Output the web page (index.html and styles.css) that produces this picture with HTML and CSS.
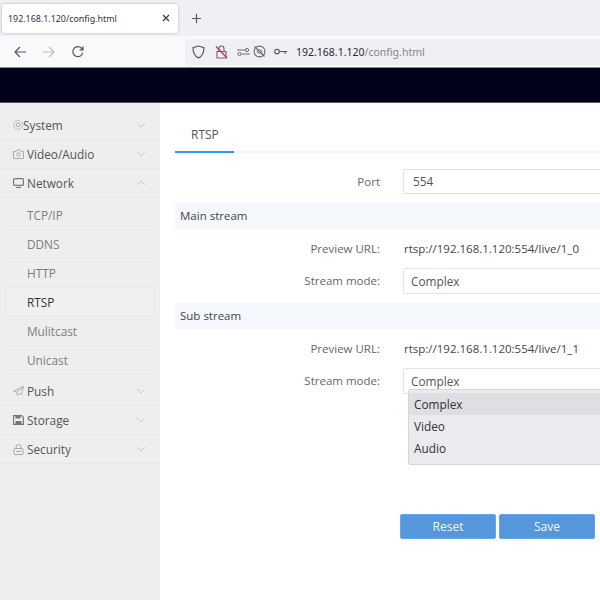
FILE: index.html
```html
<!DOCTYPE html>
<html lang="en">
<head>
    <meta charset="UTF-8">
    <title>192.168.1.120/config.html</title>
    <link rel="stylesheet" href="styles.css">
</head>
<body>
    <div class="tabstrip">
        <div class="tab">
            <span class="tab-title">192.168.1.120/config.html</span>
            <svg class="tab-close" width="8" height="8" viewBox="0 0 8 8"><path d="M1 1l6 6M7 1l-6 6" stroke="#3a3a42" stroke-width="1.2"/></svg>
        </div>
        <svg class="new-tab" width="11" height="11" viewBox="0 0 11 11"><path d="M5.500 1v9M1 5.500h9" stroke="#55555c" stroke-width="1.200"/></svg>
    </div>
    <div class="toolbar">
        <div class="nav-buttons">
            <svg width="14" height="14" viewBox="0 0 14 14" fill="none"><path d="M13 7H2M7 2L2 7l5 5" stroke="#55555c" stroke-width="1.2"/></svg>
            <svg width="14" height="14" viewBox="0 0 14 14" fill="none"><path d="M1 7h11M7 2l5 5-5 5" stroke="#bcbcc2" stroke-width="1.2"/></svg>
            <svg width="14" height="14" viewBox="0 0 14 14" fill="none"><path d="M11.800 7.500A5 5 0 1 1 10.300 3L12 4.600M12 1.200v3.600H8.500" stroke="#55555c" stroke-width="1.200"/></svg>
        </div>
        <div class="urlbar">
            <svg class="u-shield" width="13" height="14" viewBox="0 0 13 14" fill="none"><path d="M6.500 1L12 2.600c0 5-1.500 8.700-5.500 10.400C2.500 11.300 1 7.600 1 2.600z" stroke="#55555c" stroke-width="1.200"/></svg>
            <svg class="u-lock" width="13" height="14" viewBox="0 0 13 14" fill="none"><path d="M2 6.500h9v6.500H2zM4 6.500V3.500a2.500 2.500 0 0 1 5 0v3" stroke="#66666c" stroke-width="1.100"/><path d="M1 1.500L12 13" stroke="#e2275f" stroke-width="1.300"/></svg>
            <svg class="u-perm" width="13" height="8" viewBox="0 0 13 8" fill="none"><path d="M0 2h8M5 6h8" stroke="#66666c" stroke-width="1"/><circle cx="10" cy="2" r="1.600" stroke="#66666c"/><circle cx="2.500" cy="6" r="1.600" stroke="#66666c"/></svg>
            <svg class="u-auto" width="13" height="13" viewBox="0 0 13 13" fill="none"><circle cx="6.500" cy="6.500" r="5.400" stroke="#66666c" stroke-width="1.100"/><path d="M3.800 6.500l2.700-2 2.700 2-2.700 2z" stroke="#66666c"/><path d="M1.500 1.500l10 10" stroke="#66666c" stroke-width="1.100"/></svg>
            <svg class="u-key" width="13" height="7" viewBox="0 0 13 7" fill="none"><circle cx="3" cy="3.500" r="2.300" stroke="#55555c" stroke-width="1.100"/><path d="M5.500 3.500H13M11 3.500V6" stroke="#55555c" stroke-width="1.100"/></svg>
            <span class="u-text">192.168.1.120<span class="u-path">/config.html</span></span>
        </div>
    </div>
    <div class="topbar"></div>

    <div class="main">
        <div class="sidebar">
            <div class="menu-item">
                <svg class="menu-icon" width="10" height="10" viewBox="0 0 10 10" fill="none"><circle cx="5" cy="5" r="4.300" stroke="#aaa" stroke-dasharray="1.500 .5"/><circle cx="5" cy="5" r="1.800" stroke="#aaa"/></svg>
                <span class="menu-label sys-label">System</span>
                <svg class="chev" width="10" height="6" viewBox="0 0 10 6" fill="none"><path d="M1 1l4 4 4-4" stroke="#c8c8c8"/></svg>
            </div>
            <div class="menu-item">
                <svg class="menu-icon" width="11" height="10" viewBox="0 0 11 10" fill="none"><path d="M.5 2.500h2.500l1-1.500h3l1 1.500h2.500v7H.5z" stroke="#aaa"/><circle cx="5.500" cy="5.500" r="1.800" stroke="#aaa"/></svg>
                <span class="menu-label">Video/Audio</span>
                <svg class="chev" width="10" height="6" viewBox="0 0 10 6" fill="none"><path d="M1 1l4 4 4-4" stroke="#c8c8c8"/></svg>
            </div>
            <div class="menu-item">
                <svg class="menu-icon" width="11" height="10" viewBox="0 0 11 10" fill="none"><rect x=".6" y=".6" width="9.800" height="6.800" rx="1" stroke="#777" stroke-width="1.200"/><path d="M3 9.500h5" stroke="#777" stroke-width="1.200"/></svg>
                <span class="menu-label">Network</span>
                <svg class="chev" width="10" height="6" viewBox="0 0 10 6" fill="none"><path d="M1 5l4-4 4 4" stroke="#c8c8c8"/></svg>
            </div>
            <div class="submenu">
                <div class="sub-item">TCP/IP</div>
                <div class="sub-item">DDNS</div>
                <div class="sub-item">HTTP</div>
                <div class="sub-item active">RTSP</div>
                <div class="sub-item">Mulitcast</div>
                <div class="sub-item">Unicast</div>
            </div>
            <div class="menu-item">
                <svg class="menu-icon" width="11" height="10" viewBox="0 0 11 10" fill="none"><path d="M10.500.5L.5 5l3 1 1 3.500 1.500-2 2.500 1zM3.500 6l7-5.500" stroke="#aaa" stroke-width=".9"/></svg>
                <span class="menu-label">Push</span>
                <svg class="chev" width="10" height="6" viewBox="0 0 10 6" fill="none"><path d="M1 1l4 4 4-4" stroke="#c8c8c8"/></svg>
            </div>
            <div class="menu-item">
                <svg class="menu-icon" width="11" height="10" viewBox="0 0 11 10" fill="none"><path d="M.6.600h8l1.800 1.800v7H.6z" stroke="#777" stroke-width="1.200"/><path d="M2.500 1h5v2.500h-5zM2.500 6h6v3h-6z" fill="#777"/></svg>
                <span class="menu-label">Storage</span>
                <svg class="chev" width="10" height="6" viewBox="0 0 10 6" fill="none"><path d="M1 1l4 4 4-4" stroke="#c8c8c8"/></svg>
            </div>
            <div class="menu-item">
                <svg class="menu-icon" width="11" height="11" viewBox="0 0 11 11" fill="none"><rect x="1" y="4.500" width="9" height="6" rx="1" stroke="#aaa"/><path d="M3 4.500V3a2.500 2.500 0 0 1 5 0v1.500M3 7.500h5" stroke="#aaa"/></svg>
                <span class="menu-label">Security</span>
                <svg class="chev" width="10" height="6" viewBox="0 0 10 6" fill="none"><path d="M1 1l4 4 4-4" stroke="#c8c8c8"/></svg>
            </div>
        </div>

        <div class="content">
            <div class="tabs">
                <div class="tabs-item">RTSP</div>
            </div>
            <div class="form-row port-row">
                <label class="form-label">Port</label>
                <div class="field port-field">554</div>
            </div>
            <div class="section">Main stream</div>
            <div class="form-row url-row">
                <label class="form-label">Preview URL:</label>
                <span class="url-value">rtsp://192.168.1.120:554/live/1_0</span>
            </div>
            <div class="form-row">
                <label class="form-label mode-label">Stream mode:</label>
                <div class="field">Complex</div>
            </div>
            <div class="section">Sub stream</div>
            <div class="form-row url-row">
                <label class="form-label">Preview URL:</label>
                <span class="url-value">rtsp://192.168.1.120:554/live/1_1</span>
            </div>
            <div class="form-row">
                <label class="form-label mode-label">Stream mode:</label>
                <div class="field">
                    Complex
                    <div class="dropdown">
                        <div class="option selected">Complex</div>
                        <div class="option">Video</div>
                        <div class="option">Audio</div>
                    </div>
                </div>
            </div>
            <div class="buttons">
                <button class="btn">Reset</button>
                <button class="btn">Save</button>
            </div>
        </div>
    </div>
</body>
</html>
```

FILE: styles.css
```css
* {
    box-sizing: border-box;
}
body {
    margin: 0;
    width: 600px;
    height: 600px;
    overflow: hidden;
    font-family: "Open Sans", "Noto Sans", sans-serif;
    background-color: #fff;
    color: #555;
    display: flex;
    flex-direction: column;
}
.tabstrip {
    height: 36px;
    background-color: #f0eff4;
    display: flex;
    align-items: center;
    padding: 3px 0 3px 2px;
}
.tab {
    width: 176px;
    height: 29px;
    background-color: #fff;
    border-radius: 3px;
    box-shadow: 0 0 3px rgba(0, 0, 0, 0.25);
    display: flex;
    align-items: center;
    justify-content: space-between;
    padding: 0 8px 0 6px;
}
.tab-title {
    font-family: "Noto Sans", sans-serif;
    font-size: 8.9px;
    color: #3c2f3c;
    white-space: nowrap;
}
.new-tab {
    margin-left: 13px;
}
.toolbar {
    height: 32px;
    background-color: #f9f9fb;
    display: flex;
    align-items: center;
    border-bottom: 1px solid #8a8a90;
}
.nav-buttons {
    width: 185px;
    display: flex;
    gap: 15px;
    padding-left: 13px;
}
.urlbar {
    flex: 1;
    height: 26px;
    background-color: #f0f0f4;
    border-radius: 4px 0 0 4px;
    display: flex;
    align-items: center;
    padding-left: 7px;
}
.u-lock {
    margin-left: 10px;
}
.u-perm {
    margin-left: 9px;
}
.u-auto {
    margin-left: 3px;
}
.u-key {
    margin-left: 8px;
}
.u-text {
    margin-left: 9px;
    font-family: "Noto Sans", sans-serif;
    font-size: 10.5px;
    color: #2b2a33;
}
.u-path {
    color: #85858c;
}
.topbar {
    height: 35px;
    background-color: #02021a;
    border-bottom: 1px solid #555;
}
.main {
    flex: 1;
    display: flex;
    min-height: 0;
}
.sidebar {
    width: 160px;
    background-color: #eee;
    padding-top: 8px;
}
.menu-item {
    height: 29px;
    display: flex;
    align-items: center;
    padding-left: 13px;
    border-bottom: 1px solid #e6e6e6;
    position: relative;
}
.menu-icon {
    flex: none;
}
.menu-label {
    margin-left: 3px;
    font-size: 11.8px;
    color: #555;
}
.sys-label {
    margin-left: 0;
}
.chev {
    position: absolute;
    right: 14px;
    top: 11px;
}
.submenu {
    padding: 3px 7px 2px 7px;
}
.sub-item {
    height: 29px;
    line-height: 28px;
    padding-left: 20px;
    font-size: 11.8px;
    color: #7d7d7d;
    border-bottom: 1px solid #e8e8e8;
}
.sub-item.active {
    background-color: #f0f0f0;
    color: #333;
}
.content {
    flex: 1;
    padding: 15px 0 0 15px;
    min-width: 0;
}
.tabs {
    height: 35px;
    border-bottom: 2px solid #f2f3f5;
}
.tabs-item {
    width: 59px;
    height: 35px;
    border-bottom: 2px solid #2f9bf0;
    padding: 8px 0 0 16px;
    font-size: 12px;
    color: #555;
}
.form-row {
    display: flex;
    align-items: center;
}
.form-label {
    width: 205px;
    text-align: right;
    font-size: 11.5px;
    color: #666;
}
.mode-label {
    margin-top: -2px;
}
.port-row {
    padding-top: 16px;
}
.field {
    margin-left: 23px;
    flex: 1;
    height: 26px;
    border: 1px solid #e4e4e4;
    border-right: none;
    border-radius: 2px 0 0 2px;
    padding-left: 7px;
    line-height: 24px;
    font-size: 11.8px;
    color: #555;
    position: relative;
}
.port-field {
    height: 25px;
    padding-left: 9px;
    line-height: 23px;
}
.section {
    height: 26px;
    margin-top: 9px;
    background-color: #f4f8fc;
    padding-left: 5px;
    line-height: 26px;
    font-size: 11.5px;
    color: #444;
}
.url-row {
    height: 39px;
}
.url-value {
    margin-left: 24px;
    font-size: 11.5px;
    color: #444;
}
.dropdown {
    position: absolute;
    left: 4px;
    top: 20px;
    width: 200px;
    height: 76px;
    background-color: #ebeaee;
    border: 1px solid #d5d5d8;
    border-right: none;
    border-radius: 3px 0 0 3px;
    padding-top: 3px;
    z-index: 2;
}
.option {
    height: 22px;
    line-height: 22px;
    padding-left: 5px;
    font-size: 11.8px;
    color: #333;
}
.option.selected {
    background-color: #dfdee3;
}
.buttons {
    display: flex;
    gap: 3px;
    margin: 120px 0 0 225px;
}
.btn {
    width: 96px;
    height: 25px;
    background-color: #5596dc;
    border: 1px solid #6aa5e4;
    border-radius: 2px;
    color: #f2f6fb;
    font-family: inherit;
    font-size: 12px;
}
```
